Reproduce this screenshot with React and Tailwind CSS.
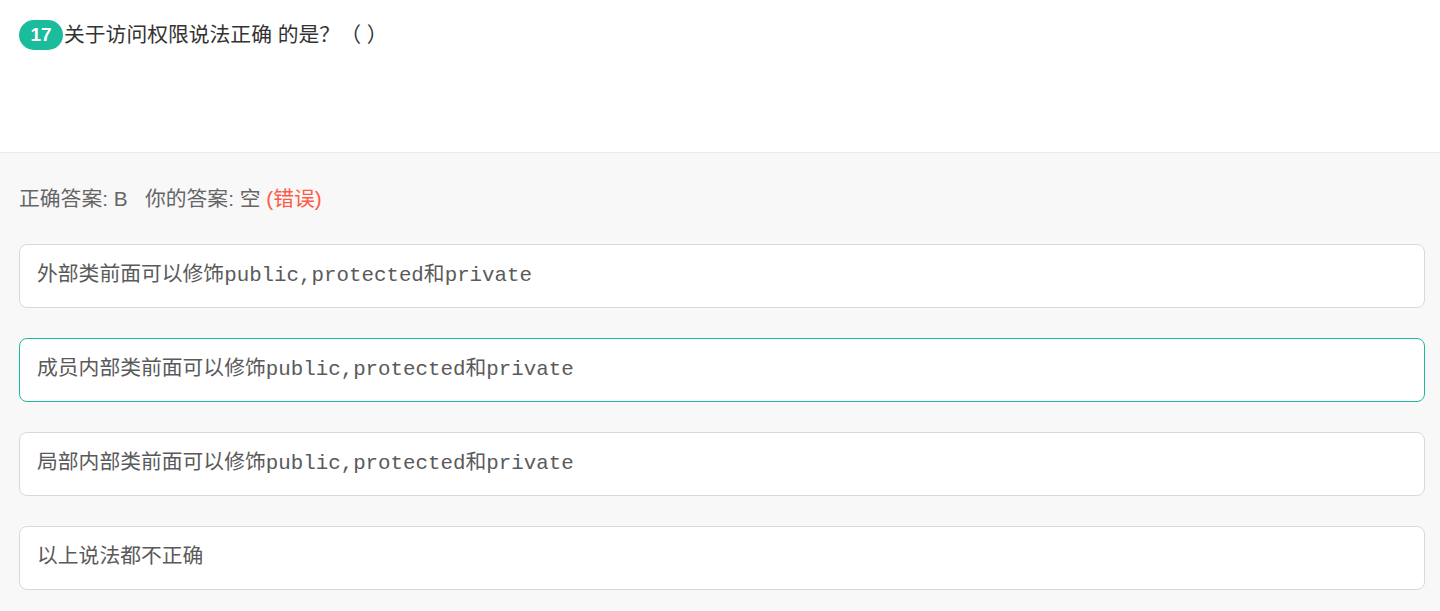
export default function App() {
  const opts = [
    { t: "外部类前面可以修饰public,protected和private", sel: false },
    { t: "成员内部类前面可以修饰public,protected和private", sel: true },
    { t: "局部内部类前面可以修饰public,protected和private", sel: false },
    { t: "以上说法都不正确", sel: false },
  ];
  return (
    <div className="w-[1440px] h-[611px] overflow-hidden bg-[#f8f8f8]" style={{ fontFamily: '"Liberation Sans", "Noto Sans CJK SC", sans-serif' }}>
      <div className="h-[153px] bg-white border-b border-[#ebebeb] pl-[19px] pr-[15px] pt-[20px]">
        <div className="flex items-center text-[20.8px] text-[#333] leading-[30px]">
          <span className="inline-flex items-center justify-center w-[44px] h-[30px] rounded-full bg-[#1abc9c] text-white text-[19px] font-bold shrink-0">17</span>
          <span className="ml-[1px]">关于访问权限说法正确 的是？（ ）</span>
        </div>
      </div>
      <div className="pl-[19px] pr-[15px] pt-[31px]">
        <div className="text-[20.8px] text-[#666] leading-[30px] mb-[30px]">
          正确答案: B&nbsp;&nbsp;&nbsp;你的答案: 空 <span className="text-[#ff5a45]">(错误)</span>
        </div>
        <div className="flex flex-col gap-[30px]">
          {opts.map((o, i) => (
            <div
              key={i}
              className={`h-[64px] rounded-[8px] bg-white border flex items-center px-[17px] text-[20.8px] text-[#5a5a5a] ${o.sel ? "border-[#1abc9c]" : "border-[#d9d9d9]"}`}
              style={{ fontFamily: '"Liberation Mono", "Noto Sans CJK SC", monospace' }}
            >
              {o.t}
            </div>
          ))}
        </div>
      </div>
    </div>
  );
}
